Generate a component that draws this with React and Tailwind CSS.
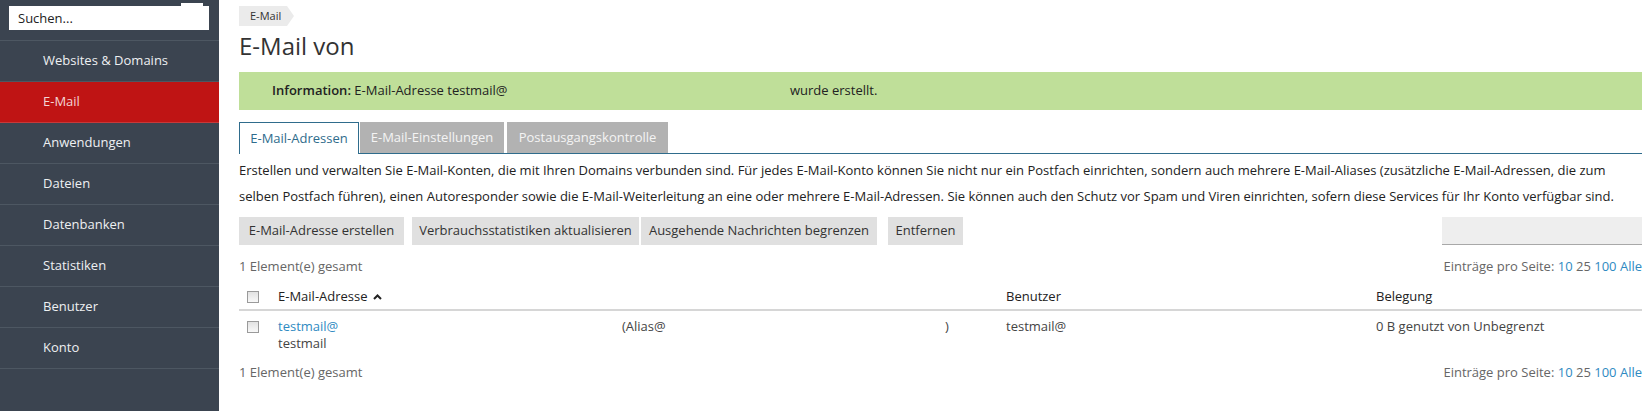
import React from 'react';

const navItems = ['Websites & Domains', 'E-Mail', 'Anwendungen', 'Dateien', 'Datenbanken', 'Statistiken', 'Benutzer', 'Konto'];

function Sidebar() {
    return (
        <div className="w-[219px] shrink-0 bg-[#3b4450] h-full">
            <div className="relative h-[41px] border-b border-[#4d5762] pt-[6px] pl-[9px]">
                <div className="absolute top-[3px] left-[181px] w-[22px] h-[4px] bg-white" />
                <div className="w-[200px] h-[24px] bg-white text-[13px] text-[#222] pl-[9px] leading-[24px]">Suchen...</div>
            </div>
            {navItems.map((item) => (
                <div
                    key={item}
                    className={
                        item === 'E-Mail'
                            ? 'h-[41px] pl-[43px] flex items-center text-[13px] text-[#f3d6d6] bg-[#bf1414] border-b border-[#c63a3a]'
                            : 'h-[41px] pl-[43px] flex items-center text-[13px] text-[#eef0f2] border-b border-[#4d5762]'
                    }
                >
                    {item}
                </div>
            ))}
        </div>
    );
}

function PerPage() {
    return (
        <span className="text-[#666]">
            Einträge pro Seite: <span className="text-[#2f8ac2]">10</span> 25 <span className="text-[#2f8ac2]">100</span> <span className="text-[#2f8ac2]">Alle</span>
        </span>
    );
}

function Checkbox() {
    return <div className="w-[12px] h-[12px] border border-[#9a9a9a] bg-gradient-to-b from-[#e2e2e2] to-[#f8f8f8]" />;
}

function App() {
    return (
        <div className="flex h-[411px] w-[1647px] bg-white overflow-hidden" style={{ fontFamily: '"Open Sans", "Noto Sans", sans-serif' }}>
            <Sidebar />
            <div className="flex-1 pl-[20px] pr-[5px] text-[13px] text-[#222]">
                {/* breadcrumb */}
                <div className="pt-[6px] flex">
                    <div className="relative h-[20px] bg-[#ebebeb] pl-[11px] pr-[6px] text-[11px] leading-[20px] text-[#333]">
                        E-Mail
                        <div className="absolute top-0 right-[-7px] w-0 h-0 border-y-[10px] border-y-transparent border-l-[7px] border-l-[#ebebeb]" />
                    </div>
                </div>
                <h1 className="mt-[4px] text-[24px] leading-[32px] text-[#333] font-normal">E-Mail von</h1>
                <div className="mt-[10px] h-[38px] bg-[#bfdf99] flex items-center pl-[33px] text-[#222]">
                    <span className="w-[518px]"><b className="font-semibold">Information:</b> E-Mail-Adresse testmail@</span>
                    <span>wurde erstellt.</span>
                </div>
                {/* tabs */}
                <div className="mt-[12px] flex items-end h-[32px] border-b border-[#2f6c8c]">
                    <div className="h-[32px] w-[120px] border border-b-0 border-[#2f6c8c] bg-white text-[#2f6c8c] flex items-center justify-center relative top-[1px]">E-Mail-Adressen</div>
                    <div className="ml-[1px] h-[31px] w-[144px] bg-[#b2b2b2] text-[#f4f4f4] flex items-center justify-center">E-Mail-Einstellungen</div>
                    <div className="ml-[3px] h-[31px] w-[161px] bg-[#b2b2b2] text-[#f4f4f4] flex items-center justify-center">Postausgangskontrolle</div>
                </div>
                <p className="mt-[3px] leading-[26px] text-[#222]">
                    Erstellen und verwalten Sie E-Mail-Konten, die mit Ihren Domains verbunden sind. Für jedes E-Mail-Konto können Sie nicht nur ein Postfach einrichten, sondern auch mehrere E-Mail-Aliases (zusätzliche E-Mail-Adressen, die zum selben Postfach führen), einen Autoresponder sowie die E-Mail-Weiterleitung an eine oder mehrere E-Mail-Adressen. Sie können auch den Schutz vor Spam und Viren einrichten, sofern diese Services für Ihr Konto verfügbar sind.
                </p>
                {/* toolbar */}
                <div className="mt-[8px] flex items-center h-[28px]">
                    <div className="h-[28px] w-[165px] bg-[#e0e0e0] text-[#333] flex items-center justify-center">E-Mail-Adresse erstellen</div>
                    <div className="ml-[8px] h-[28px] w-[227px] bg-[#e0e0e0] text-[#333] flex items-center justify-center">Verbrauchsstatistiken aktualisieren</div>
                    <div className="ml-[2px] h-[28px] w-[236px] bg-[#e0e0e0] text-[#333] flex items-center justify-center">Ausgehende Nachrichten begrenzen</div>
                    <div className="ml-[11px] h-[28px] w-[75px] bg-[#e0e0e0] text-[#333] flex items-center justify-center">Entfernen</div>
                    <div className="ml-auto h-[28px] w-[200px] bg-[#eeeeee] border-b border-[#a8a8a8]" />
                </div>
                <div className="mt-[11px] flex justify-between leading-[20px]">
                    <span className="text-[#666]">1 Element(e) gesamt</span>
                    <PerPage />
                </div>
                {/* table */}
                <div className="mt-[9px] h-[26px] flex items-center border-b-2 border-[#d6d6d6] text-[#222]">
                    <div className="w-[39px] pl-[8px]"><Checkbox /></div>
                    <div className="w-[728px] flex items-center">
                        E-Mail-Adresse
                        <svg className="ml-[5px]" width="9" height="6" viewBox="0 0 9 6">
                            <path d="M1 5 L4.5 1.5 L8 5" fill="none" stroke="#222" strokeWidth="2" />
                        </svg>
                    </div>
                    <div className="w-[370px]">Benutzer</div>
                    <div>Belegung</div>
                </div>
                <div className="pt-[7px] flex text-[#222] leading-[17px]">
                    <div className="w-[39px] pl-[8px] pt-[3px]"><Checkbox /></div>
                    <div className="w-[344px]">
                        <div className="text-[#2f8ac2]">testmail@</div>
                        <div className="text-[#444]">testmail</div>
                    </div>
                    <div className="w-[323px] text-[#444]">(Alias@</div>
                    <div className="w-[61px] text-[#444]">)</div>
                    <div className="w-[370px] text-[#444]">testmail@</div>
                    <div className="text-[#444]">0 B genutzt von Unbegrenzt</div>
                </div>
                <div className="mt-[10px] flex justify-between leading-[20px]">
                    <span className="text-[#666]">1 Element(e) gesamt</span>
                    <PerPage />
                </div>
            </div>
        </div>
    );
}

export default App;
